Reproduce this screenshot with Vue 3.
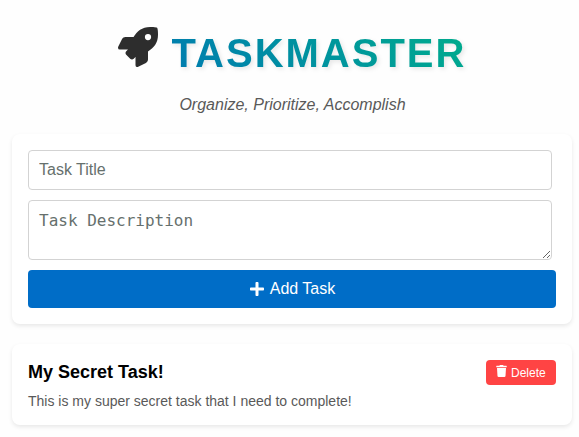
<script setup>
import { ref } from 'vue'

const title = ref('')
const description = ref('')
const tasks = ref([
  { id: 1, title: 'My Secret Task!', description: 'This is my super secret task that I need to complete!' },
])

function addTask() {
  if (!title.value) return
  tasks.value.push({ id: Date.now(), title: title.value, description: description.value })
  title.value = ''
  description.value = ''
}

function removeTask(id) {
  tasks.value = tasks.value.filter((task) => task.id !== id)
}
</script>

<template>
  <main class="app">
    <header class="header">
      <div class="brand">
        <svg class="rocket" viewBox="0 0 512 512" fill="currentColor">
          <path d="M505.12 19.094c-1.19-5.531-6.658-11-12.207-12.188C460.716 0 435.507 0 410.407 0 307.175 0 245.27 55.203 199.052 128H94.838c-16.348.016-35.557 11.875-42.887 26.484L2.516 253.297A28.4 28.4 0 0 0 0 264a24.009 24.009 0 0 0 24.006 24h103.81l-22.474 22.469c-11.366 11.361-12.996 32.258 0 45.25l50.904 50.906c11.156 11.188 32.156 13.156 45.277 0l22.475-22.469V488a24.009 24.009 0 0 0 24.006 24 28.56 28.56 0 0 0 10.707-2.516l98.728-49.39c14.629-7.297 26.508-26.5 26.508-42.86V312.797c72.597-46.313 128.035-108.406 128.035-211.094.093-25.203.093-50.406-6.862-82.61ZM384.04 168A40 40 0 1 1 424.05 128 40.023 40.023 0 0 1 384.04 168Z" />
        </svg>
        <h1 class="name">TASKMASTER</h1>
      </div>
      <p class="tagline">Organize, Prioritize, Accomplish</p>
    </header>

    <form class="card form" @submit.prevent="addTask">
      <input v-model="title" class="field" type="text" placeholder="Task Title" />
      <textarea v-model="description" class="field area" placeholder="Task Description"></textarea>
      <button class="add" type="submit">
        <svg class="plus" viewBox="0 0 448 512" fill="currentColor">
          <path d="M416 208H272V64c0-17.67-14.33-32-32-32h-32c-17.67 0-32 14.33-32 32v144H32c-17.67 0-32 14.33-32 32v32c0 17.67 14.33 32 32 32h144v144c0 17.67 14.33 32 32 32h32c17.67 0 32-14.33 32-32V304h144c17.67 0 32-14.33 32-32v-32c0-17.67-14.33-32-32-32z" />
        </svg>
        <span>Add Task</span>
      </button>
    </form>

    <article v-for="task in tasks" :key="task.id" class="card task">
      <div class="row">
        <h2 class="task-title">{{ task.title }}</h2>
        <button class="delete" type="button" @click="removeTask(task.id)">
          <svg class="trash" viewBox="0 0 448 512" fill="currentColor">
            <path d="M432 32H312l-9.4-18.7A24 24 0 0 0 281.1 0H166.8a23.72 23.72 0 0 0-21.4 13.3L136 32H16A16 16 0 0 0 0 48v32a16 16 0 0 0 16 16h416a16 16 0 0 0 16-16V48a16 16 0 0 0-16-16zM53.2 467a48 48 0 0 0 47.9 45h245.8a48 48 0 0 0 47.9-45L416 128H32z" />
          </svg>
          <span>Delete</span>
        </button>
      </div>
      <p class="task-text">{{ task.description }}</p>
    </article>
  </main>
</template>

<style>
body {
  margin: 0;
  background: #fefefe;
}
</style>

<style scoped>
.app {
  box-sizing: border-box;
  width: 572px;
  padding: 24px 0 12px 12px;
  font-family: "Liberation Sans", Arial, sans-serif;
}
.header {
  display: flex;
  flex-direction: column;
  align-items: center;
  height: 110px;
}
.brand {
  display: flex;
  align-items: flex-start;
}
.rocket {
  width: 40px;
  height: 40px;
  margin: 3px 14px 0 0;
  color: #2d2d2d;
}
.name {
  margin: 6px 0 0;
  font-size: 40px;
  line-height: 46px;
  font-weight: 700;
  letter-spacing: 2px;
  color: transparent;
  background: linear-gradient(45deg, #007bb0, #00ac8c);
  background-clip: text;
  -webkit-background-clip: text;
  filter: drop-shadow(2px 2px 2px rgba(0, 0, 0, 0.09));
}
.tagline {
  margin: 20px 0 0;
  padding-left: 1px;
  font-size: 16px;
  line-height: 18px;
  font-style: italic;
  color: #595959;
}
.card {
  box-sizing: border-box;
  width: 560px;
  padding: 16px;
  border-radius: 8px;
  background: #fff;
  box-shadow: 0 2px 4px rgba(0, 0, 0, 0.09);
}
.form {
  display: flex;
  flex-direction: column;
  gap: 10px;
  height: 190px;
}
.field {
  box-sizing: border-box;
  width: 524px;
  height: 40px;
  margin: 0;
  padding: 10px;
  border: 1px solid #d3d3d3;
  border-radius: 4px;
  background: #fff;
  font-family: "Liberation Sans", Arial, sans-serif;
  font-size: 16px;
  outline: none;
}
.field::placeholder {
  color: #66706d;
}
.area {
  height: 60px;
  font-family: "DejaVu Sans Mono", monospace;
}
.add {
  display: flex;
  align-items: center;
  justify-content: center;
  gap: 5.5px;
  height: 38px;
  padding: 0 0 0 1.5px;
  border: 0;
  border-radius: 4px;
  background: #006dc7;
  color: #fff;
  font: 16px/18px "Liberation Sans", Arial, sans-serif;
}
.plus {
  width: 14px;
  height: 16px;
}
.task {
  height: 81px;
  margin-top: 20px;
}
.row {
  display: flex;
  align-items: flex-start;
  justify-content: space-between;
  height: 25px;
}
.task-title {
  margin: 2px 0 0;
  font-size: 18px;
  line-height: 20px;
  font-weight: 700;
  color: #000;
}
.delete {
  display: flex;
  align-items: flex-start;
  gap: 4px;
  box-sizing: border-box;
  width: 70px;
  height: 25px;
  padding: 5px 10px;
  border: 0;
  border-radius: 4px;
  background: #ff4444;
  color: #fff;
  font: 12px/16px "Liberation Sans", Arial, sans-serif;
}
.trash {
  width: 11px;
  height: 12px;
}
.task-text {
  margin: 8px 0 0;
  font-size: 14px;
  line-height: 16px;
  color: #595959;
}
</style>
